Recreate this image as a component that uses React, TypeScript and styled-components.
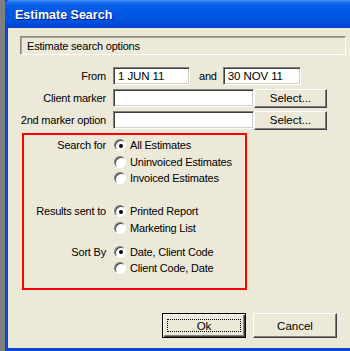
import React from "react";
import styled, { createGlobalStyle } from "styled-components";

const Global = createGlobalStyle`
  html, body { margin: 0; padding: 0; background: #7f7f7f; }
  body { font-family: "Liberation Sans", Arial, sans-serif; }
`;

const Screen = styled.div`
  display: flex;
  width: 350px;
  height: 351px;
  background: #7f7f7f;
  overflow: hidden;
`;

const Window = styled.div`
  margin-left: 5px;
  flex: 1;
  display: flex;
  flex-direction: column;
  border-left: 3px solid #0b47d6;
  border-bottom: 3px solid #0b47d6;
  box-shadow: inset 1px 0 #2a6df0;
`;

const TitleBar = styled.div`
  height: 28px;
  margin-left: -3px;
  display: flex;
  align-items: center;
  padding-left: 10px;
  padding-top: 1px;
  box-sizing: border-box;
  background: linear-gradient(
    to bottom,
    #4a97f8 0px,
    #1f6ff0 2px,
    #0a5ee9 5px,
    #0058e4 12px,
    #0054e0 20px,
    #0048d8 25px,
    #0040c8 27px,
    #0a52de 28px
  );
  color: #fff;
  font-weight: bold;
  font-size: 12.5px;
  text-shadow: 1px 1px 0 #0a1f80;
  border-top-left-radius: 5px;
`;

const Content = styled.div`
  flex: 1;
  background: #ece9d8;
  display: flex;
  flex-direction: column;
  padding-top: 8px;
  font-size: 11px;
  letter-spacing: -0.2px;
  color: #000;
`;

const GroupHeader = styled.div`
  margin-left: 12px;
  width: 326px;
  height: 19px;
  box-sizing: border-box;
  border: 1px solid;
  border-color: #8c8a7d #ffffff #ffffff #8c8a7d;
  box-shadow: inset 1px 1px 0 #a9a699;
  display: flex;
  align-items: center;
  padding-left: 6px;
  padding-top: 1px;
`;

const Form = styled.div`
  margin-top: 12px;
  display: grid;
  grid-template-columns: 90px 1fr;
  column-gap: 7px;
  row-gap: 4px;
  margin-left: 8px;
`;

const Label = styled.div`
  text-align: right;
  height: 18px;
  line-height: 18px;
  white-space: nowrap;
`;

const Fields = styled.div`
  display: flex;
  align-items: center;
  height: 18px;
`;

const Input = styled.div<{ $w: number }>`
  width: ${(p) => p.$w}px;
  height: 18px;
  box-sizing: border-box;
  background: #fff;
  border: 1px solid;
  border-color: #808080 #ffffff #ffffff #808080;
  box-shadow: inset 1px 1px 0 #404040, inset -1px -1px 0 #d4d0c8;
  padding-left: 4px;
  line-height: 16px;
  font-size: 11.5px;
  letter-spacing: -0.1px;
  white-space: nowrap;
`;

const And = styled.span`
  margin: 0 6px 0 9px;
`;

const Button = styled.div<{ $w: number; $h: number; $default?: boolean }>`
  width: ${(p) => p.$w}px;
  height: ${(p) => p.$h}px;
  box-sizing: border-box;
  display: flex;
  align-items: center;
  justify-content: center;
  background: #ece9d8;
  border: 1px solid;
  border-color: ${(p) => (p.$default ? "#000" : "#ffffff #404040 #404040 #ffffff")};
  box-shadow: ${(p) =>
    p.$default
      ? "inset 1px 1px 0 #ffffff, inset -1px -1px 0 #404040, inset -2px -2px 0 #808080"
      : "inset -1px -1px 0 #808080"};
  font-size: 11.5px;
  letter-spacing: 0;
  flex-shrink: 0;
`;

const Focus = styled.div`
  border: 1px dotted #000;
  width: calc(100% - 8px);
  height: calc(100% - 10px);
  box-sizing: border-box;
  display: flex;
  align-items: center;
  justify-content: center;
`;

const RedBox = styled.div`
  margin-top: 4px;
  margin-left: 14px;
  width: 225px;
  height: 157px;
  box-sizing: border-box;
  border: 2px solid #ff0000;
  padding-top: 2px;
  display: flex;
  flex-direction: column;
`;

const OptionGroup = styled.div<{ $mt: number }>`
  display: grid;
  grid-template-columns: 82px 1fr;
  column-gap: 8px;
  margin-top: ${(p) => p.$mt}px;
`;

const GroupLabel = styled.div`
  text-align: right;
  height: 16.5px;
  line-height: 16.5px;
  white-space: nowrap;
`;

const RadioList = styled.div`
  display: flex;
  flex-direction: column;
`;

const RadioRow = styled.div`
  display: flex;
  align-items: center;
  height: 16.5px;
  white-space: nowrap;
`;

const RadioCircle = styled.span<{ $checked?: boolean }>`
  width: 12px;
  height: 12px;
  box-sizing: border-box;
  border-radius: 50%;
  border: 1px solid;
  border-color: #808080 #ffffff #ffffff #808080;
  box-shadow: inset 1px 1px 0 #404040;
  background: #fff;
  margin-right: 4px;
  display: flex;
  align-items: center;
  justify-content: center;
  &::after {
    content: "";
    display: ${(p) => (p.$checked ? "block" : "none")};
    width: 4px;
    height: 4px;
    border-radius: 50%;
    background: #000;
    margin: 1px 0 0 1px;
  }
`;

const Footer = styled.div`
  display: flex;
  justify-content: flex-end;
  gap: 7px;
  margin-top: 23px;
  padding-right: 13px;
`;

type Opt = { label: string; checked?: boolean };

const Radio: React.FC<Opt> = ({ label, checked }) => (
  <RadioRow>
    <RadioCircle $checked={checked} />
    <span>{label}</span>
  </RadioRow>
);

const Group: React.FC<{ label: string; mt: number; options: Opt[] }> = ({ label, mt, options }) => (
  <OptionGroup $mt={mt}>
    <GroupLabel>{label}</GroupLabel>
    <RadioList>
      {options.map((o) => (
        <Radio key={o.label} {...o} />
      ))}
    </RadioList>
  </OptionGroup>
);

export default function App() {
  return (
    <>
      <Global />
      <Screen>
        <Window>
          <TitleBar>Estimate Search</TitleBar>
          <Content>
            <GroupHeader>Estimate search options</GroupHeader>
            <Form>
              <Label>From</Label>
              <Fields>
                <Input $w={77}>1 JUN 11</Input>
                <And>and</And>
                <Input $w={78}>30 NOV 11</Input>
              </Fields>
              <Label>Client marker</Label>
              <Fields>
                <Input $w={141} />
                <Button $w={73} $h={19}>Select...</Button>
              </Fields>
              <Label>2nd marker option</Label>
              <Fields>
                <Input $w={141} />
                <Button $w={73} $h={19}>Select...</Button>
              </Fields>
            </Form>
            <RedBox>
              <Group
                label="Search for"
                mt={0}
                options={[
                  { label: "All Estimates", checked: true },
                  { label: "Uninvoiced Estimates" },
                  { label: "Invoiced Estimates" },
                ]}
              />
              <Group
                label="Results sent to"
                mt={16.5}
                options={[{ label: "Printed Report", checked: true }, { label: "Marketing List" }]}
              />
              <Group
                label="Sort By"
                mt={7.5}
                options={[{ label: "Date, Client Code", checked: true }, { label: "Client Code, Date" }]}
              />
            </RedBox>
            <Footer>
              <Button $w={84} $h={25} $default>
                <Focus>Ok</Focus>
              </Button>
              <Button $w={84} $h={25}>Cancel</Button>
            </Footer>
          </Content>
        </Window>
      </Screen>
    </>
  );
}
